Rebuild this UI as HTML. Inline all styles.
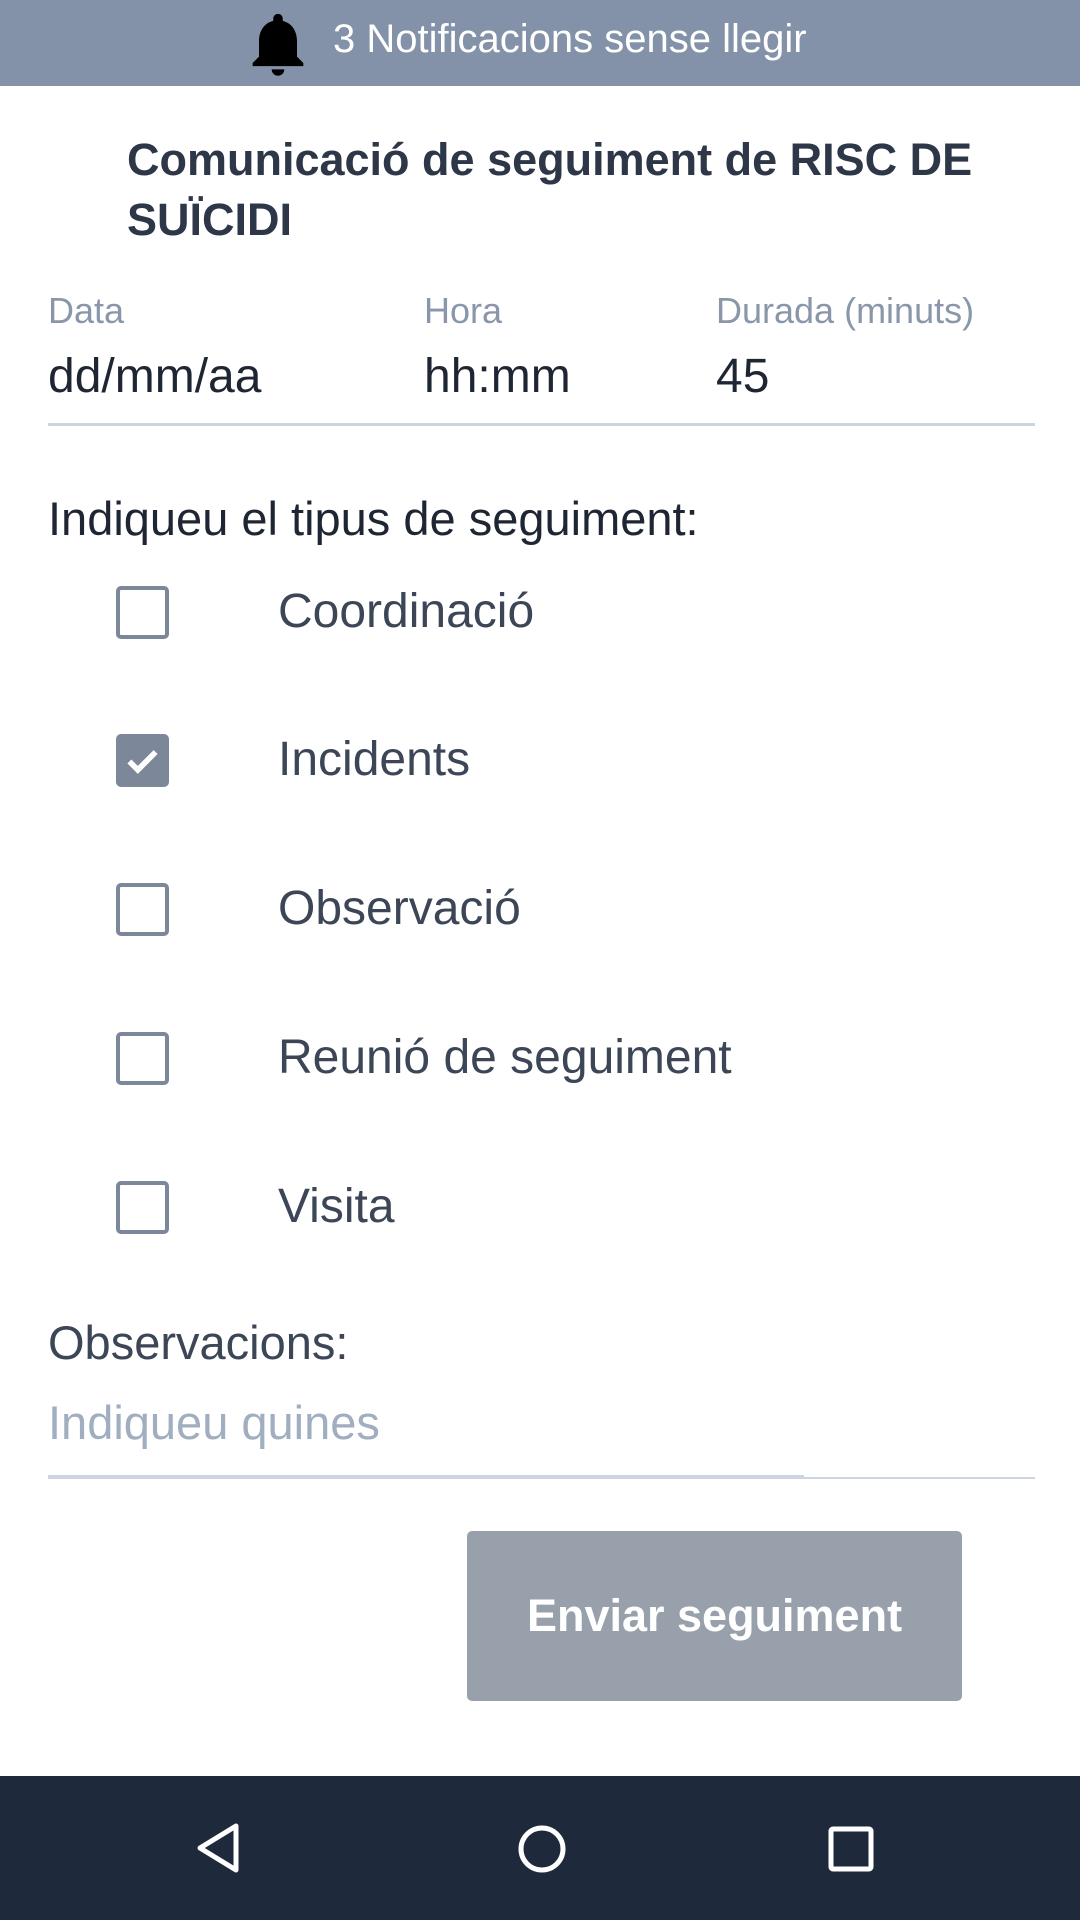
<!DOCTYPE html>
<html><head><meta charset="utf-8"><style>
*{margin:0;padding:0;box-sizing:border-box}
body{width:1080px;height:1920px;background:#fff;font-family:"Liberation Sans",sans-serif;position:relative;overflow:hidden}
.a{position:absolute;white-space:nowrap}
.top{position:absolute;left:0;top:0;width:1080px;height:86px;background:#8492a9}
.lbl{font-size:36px;color:#8a97ab}
.val{font-size:48px;color:#1f2633}
.cb{position:absolute;left:116px;width:53px;height:53px;border:4px solid #7c879a;border-radius:5px}
.ct{position:absolute;left:278px;font-size:48px;color:#3c4657}
</style></head><body>
<div class="top"></div>
<svg class="a" style="left:240px;top:6px" width="76" height="76" viewBox="0 0 24 24"><path fill="#000" d="M12 22c1.1 0 2-.9 2-2h-4c0 1.1.9 2 2 2zm6-6v-5c0-3.07-1.64-5.64-4.5-6.32V4c0-.83-.67-1.5-1.5-1.5s-1.5.67-1.5 1.5v.68C7.63 5.36 6 7.92 6 11v5l-2 2v1h16v-1l-2-2z"/></svg>
<div class="a" style="left:333px;top:17px;font-size:40px;color:#fff">3 Notificacions sense llegir</div>
<div class="a" style="left:127px;top:130px;font-size:45px;font-weight:bold;color:#2d3748;line-height:60px">Comunicació de seguiment de RISC DE<br>SUÏCIDI</div>
<div class="a lbl" style="left:48px;top:290px">Data</div>
<div class="a lbl" style="left:424px;top:290px">Hora</div>
<div class="a lbl" style="left:716px;top:290px">Durada (minuts)</div>
<div class="a val" style="left:48px;top:349px">dd/mm/aa</div>
<div class="a val" style="left:424px;top:349px">hh:mm</div>
<div class="a val" style="left:716px;top:349px">45</div>
<div class="a" style="left:48px;top:423px;width:987px;height:3px;background:#cbd5e0"></div>
<div class="a" style="left:48px;top:491px;font-size:47px;color:#1f2633">Indiqueu el tipus de seguiment:</div>
<div class="cb" style="top:586px"></div><div class="ct" style="top:584px">Coordinació</div>
<div class="cb" style="top:734px;background:#7c879a"><svg width="45" height="45" viewBox="0 0 24 24" style="position:absolute;left:0;top:0"><path d="M5 12.5l4.5 4.5L19 7.5" stroke="#fff" stroke-width="3" fill="none"/></svg></div><div class="ct" style="top:732px">Incidents</div>
<div class="cb" style="top:883px"></div><div class="ct" style="top:881px">Observació</div>
<div class="cb" style="top:1032px"></div><div class="ct" style="top:1030px">Reunió de seguiment</div>
<div class="cb" style="top:1181px"></div><div class="ct" style="top:1179px">Visita</div>
<div class="a" style="left:48px;top:1315px;font-size:47px;color:#3c4657">Observacions:</div>
<div class="a" style="left:48px;top:1395px;font-size:47px;color:#a0aec0">Indiqueu quines</div>
<div class="a" style="left:48px;top:1477px;width:987px;height:2px;background:#cbd5e0"></div>
<div class="a" style="left:48px;top:1475px;width:756px;height:4px;background:#cbd5e0"></div>
<div class="a" style="left:467px;top:1531px;width:495px;height:170px;background:#98a0ab;border-radius:5px;color:#fff;font-size:45px;font-weight:bold;text-align:center;line-height:170px">Enviar seguiment</div>
<div class="a" style="left:0;top:1776px;width:1080px;height:144px;background:#1e2a3b"></div>
<svg class="a" style="left:190px;top:1820px" width="56" height="56" viewBox="0 0 56 56"><path d="M46 6 L10 28 L46 50 Z" stroke="#fff" stroke-width="5" fill="none" stroke-linejoin="round"/></svg>
<svg class="a" style="left:517px;top:1824px" width="50" height="50" viewBox="0 0 50 50"><circle cx="25" cy="25" r="21" stroke="#fff" stroke-width="5" fill="none"/></svg>
<svg class="a" style="left:828px;top:1826px" width="46" height="46" viewBox="0 0 46 46"><rect x="3" y="3" width="40" height="40" rx="2" stroke="#fff" stroke-width="5" fill="none"/></svg>
</body></html>
